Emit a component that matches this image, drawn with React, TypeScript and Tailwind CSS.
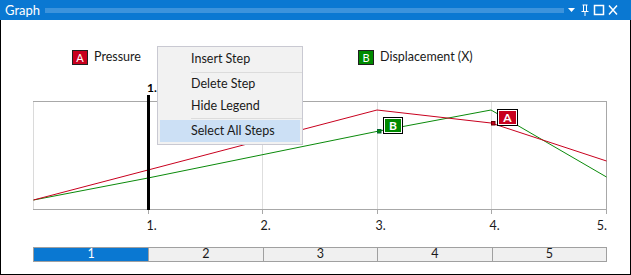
import React from 'react';

const font = "font-['Lato','Noto_Sans',sans-serif]";
const svgFont = 'Lato, Noto Sans, sans-serif';

// chart coordinates are page coords shifted by (33, 80)
const redPts = '0.5,120 115,90 344,30 458,43 573.5,81';
const greenPts = '0.5,120 115,98 346,51 458,30 573.5,97';
const grid = [229.5, 344.5, 458.5];
const ticks = [115.5, 229.5, 344.5, 458.5, 573.5];

const TitleBar = () => (
  <div className="h-[20px] bg-[#0a78d2] flex items-center pl-[5px] pr-[12px] text-white">
    <span className={`${font} text-[13px] leading-none`}>Graph</span>
    <div className="ml-[5px] flex-1 h-[5px] bg-[radial-gradient(circle,#3c93dc_0.8px,transparent_0.9px)] bg-[length:2px_2px]" />
    <svg width="52" height="14" viewBox="0 0 52 14" className="ml-[3px]">
      {/* dropdown */}
      <path d="M1 5h7l-3.5 4z" fill="#fff" />
      {/* pin */}
      <path d="M15.5 2h5M16.5 2v6M19.5 2v6M14.5 8.5h7M18 9v4" stroke="#fff" strokeWidth="1" fill="none" />
      {/* maximize */}
      <rect x="27.5" y="2.5" width="9" height="9" stroke="#fff" strokeWidth="1.5" fill="none" />
      {/* close */}
      <path d="M42 2.5l8 9M50 2.5l-8 9" stroke="#fff" strokeWidth="1.5" />
    </svg>
  </div>
);

const LegendItem = ({ letter, label, color }: { letter: string; label: string; color: string }) => (
  <div className="flex items-center gap-[6px]">
    <div
      className={`w-[16px] h-[15px] border border-[#202020] flex items-center justify-center text-white text-[11px] leading-none ${font}`}
      style={{ backgroundColor: color }}
    >
      {letter}
    </div>
    <span className={`${font} text-[12.5px] text-[#1a1a1a]`}>{label}</span>
  </div>
);

const Chart = () => (
  <svg width="600" height="155" viewBox="0 0 600 155" className="block overflow-visible">
    {/* plot frame */}
    <line x1="0.5" y1="21" x2="0.5" y2="129" stroke="#dadada" />
    <line x1="0" y1="21.5" x2="574" y2="21.5" stroke="#a8a8a8" />
    <line x1="573.5" y1="21" x2="573.5" y2="134" stroke="#a8a8a8" />
    {grid.map((x) => (
      <line key={x} x1={x} y1="22" x2={x} y2="129" stroke="#dedede" />
    ))}
    <line x1="0" y1="129.5" x2="574" y2="129.5" stroke="#a8a8a8" />
    {ticks.map((x) => (
      <line key={x} x1={x} y1="129" x2={x} y2="134" stroke="#a8a8a8" />
    ))}

    {/* series */}
    <polyline points={greenPts} fill="none" stroke="#0a8a0a" strokeWidth="1" />
    <polyline points={redPts} fill="none" stroke="#c8001e" strokeWidth="1" />

    {/* current step marker */}
    <rect x="114" y="15" width="3" height="115" fill="#000" />
    <text x="114" y="12" fontSize="12" fontWeight="bold" fill="#000" fontFamily={svgFont}>1.</text>

    {/* B marker */}
    <rect x="344.5" y="49.5" width="3.5" height="3.5" fill="#0a8a0a" stroke="#063" />
    <rect x="350.5" y="37.5" width="19" height="16" fill="#fff" stroke="#000" />
    <rect x="352" y="39" width="16" height="13" fill="#008a00" />
    <text x="360" y="50" fontSize="12" fontWeight="bold" fill="#fff" textAnchor="middle" fontFamily={svgFont}>B</text>

    {/* A marker */}
    <rect x="458.5" y="41.5" width="3.5" height="3.5" fill="#c8001e" stroke="#600" />
    <rect x="464.5" y="29.5" width="20" height="16" fill="#fff" stroke="#000" />
    <rect x="466" y="31" width="17" height="13" fill="#c8001e" />
    <text x="474.5" y="42" fontSize="12" fontWeight="bold" fill="#fff" textAnchor="middle" fontFamily={svgFont}>A</text>

    {/* tick labels */}
    {['1.', '2.', '3.', '4.'].map((t, i) => (
      <text key={t} x={ticks[i] - 2} y="150" fontSize="12.5" fill="#1a1a1a" fontFamily={svgFont}>{t}</text>
    ))}
    <text x="574" y="150" fontSize="12.5" fill="#1a1a1a" textAnchor="end" fontFamily={svgFont}>5.</text>
  </svg>
);

const StepBar = () => (
  <div className={`w-[574px] h-[15px] border border-[#a0a0a0] flex text-[12.5px] leading-none ${font}`}>
    <div className="w-[114px] bg-[#0a78d2] text-white flex items-center justify-center">1</div>
    {['2', '3', '4', '5'].map((s) => (
      <div key={s} className="flex-1 bg-[#f0f0f0] border-l border-[#a0a0a0] text-[#1a1a1a] flex items-center justify-center">
        {s}
      </div>
    ))}
  </div>
);

const ContextMenu = () => (
  <div className={`absolute left-[157px] top-[46px] w-[146px] bg-[#f2f2f2] border border-[#c9c9d2] ${font} text-[12.5px] text-[#1a1a1a]`}>
    <div className="h-[24px] flex items-center pl-[33px]">Insert Step</div>
    <div className="mt-[1px] ml-[33px] h-px bg-[#dcdcdc]" />
    <div className="h-[22px] flex items-center pl-[33px]">Delete Step</div>
    <div className="h-[22px] flex items-center pl-[33px]">Hide Legend</div>
    <div className="mt-[1px] ml-[33px] h-px bg-[#dcdcdc]" />
    <div className="mt-[1px] mx-[2px] mb-[2px] h-[22px] flex items-center pl-[31px] bg-[#cce0f5]">Select All Steps</div>
  </div>
);

export default function App() {
  return (
    <div className="relative w-[631px] h-[275px] bg-white flex flex-col overflow-hidden">
      <TitleBar />
      <div className="flex-1 border-x border-b border-black pl-[32px] flex flex-col">
        <div className="h-[60px] flex items-center pt-[15px]">
          <div className="ml-[39px] w-[286px]">
            <LegendItem letter="A" label="Pressure" color="#c8001e" />
          </div>
          <LegendItem letter="B" label="Displacement (X)" color="#008a00" />
        </div>
        <Chart />
        <div className="mt-[12px]">
          <StepBar />
        </div>
      </div>
      <ContextMenu />
    </div>
  );
}
